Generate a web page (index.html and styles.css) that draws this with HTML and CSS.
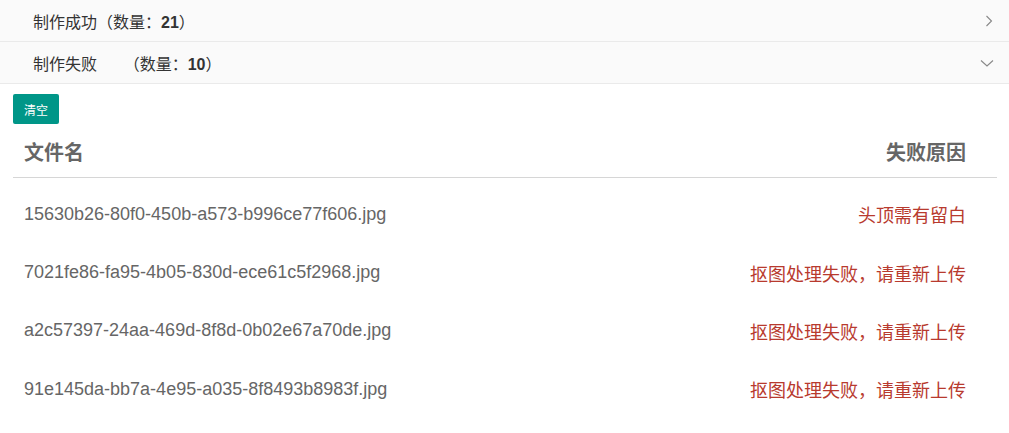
FILE: index.html
```html
<!DOCTYPE html>
<html lang="zh">
<head>
<meta charset="utf-8">
<link rel="stylesheet" href="styles.css">
</head>
<body>
<div class="collapse">
  <div class="colla-title">
    <span>制作成功（数量：<b>21</b>）</span>
    <svg class="arrow" width="12" height="14" viewBox="0 0 12 14"><path d="M3.5 2 L8.5 7 L3.5 12" fill="none" stroke="#888" stroke-width="1.1"/></svg>
  </div>
  <div class="colla-title">
    <span>制作失败&nbsp;&nbsp;&nbsp;&nbsp;&nbsp;&nbsp;（数量：<b>10</b>）</span>
    <svg class="arrow" width="16" height="12" viewBox="0 0 16 12"><path d="M2 3.5 L8 9 L14 3.5" fill="none" stroke="#888" stroke-width="1.1"/></svg>
  </div>
</div>
<div class="content">
  <button class="btn">清空</button>
  <div class="table">
    <div class="thead">
      <div class="c-name">文件名</div>
      <div class="c-reason">失败原因</div>
    </div>
    <div class="tbody">
      <div class="row"><div class="c-name">15630b26-80f0-450b-a573-b996ce77f606.jpg</div><div class="c-reason">头顶需有留白</div></div>
      <div class="row"><div class="c-name">7021fe86-fa95-4b05-830d-ece61c5f2968.jpg</div><div class="c-reason">抠图处理失败，请重新上传</div></div>
      <div class="row"><div class="c-name">a2c57397-24aa-469d-8f8d-0b02e67a70de.jpg</div><div class="c-reason">抠图处理失败，请重新上传</div></div>
      <div class="row"><div class="c-name">91e145da-bb7a-4e95-a035-8f8493b8983f.jpg</div><div class="c-reason">抠图处理失败，请重新上传</div></div>
    </div>
  </div>
</div>
</body>
</html>
```

FILE: styles.css
```css
html, body {
  margin: 0;
  padding: 0;
  background: #fff;
  font-family: "Liberation Sans", "Noto Sans CJK SC", sans-serif;
}
.collapse {
  display: flex;
  flex-direction: column;
}
.colla-title {
  height: 41px;
  border-bottom: 1px solid #eaeaea;
  background: #fafafa;
  display: flex;
  align-items: center;
  justify-content: space-between;
  padding: 0 14px 0 33px;
  font-size: 16px;
  color: #333;
}
.colla-title b {
  font-weight: bold;
}
.arrow {
  display: block;
}
.content {
  padding: 10px 12px 0 13px;
}
.btn {
  display: block;
  height: 30px;
  width: 46px;
  padding: 0;
  border: none;
  border-radius: 2px;
  background: #009688;
  color: #fff;
  font-family: inherit;
  font-size: 12px;
}
.table {
  margin-top: 2px;
}
.thead {
  display: flex;
  justify-content: space-between;
  align-items: center;
  height: 51px;
  border-bottom: 1px solid #d6d6d6;
  font-size: 20px;
  font-weight: bold;
  color: #666;
}
.c-name {
  padding-left: 11px;
}
.c-reason {
  padding-right: 31px;
}
.tbody {
  padding-top: 7px;
}
.row {
  display: flex;
  justify-content: space-between;
  align-items: center;
  height: 58.4px;
  font-size: 18px;
  color: #666;
}
.row .c-reason {
  color: #b83a2e;
}
```
